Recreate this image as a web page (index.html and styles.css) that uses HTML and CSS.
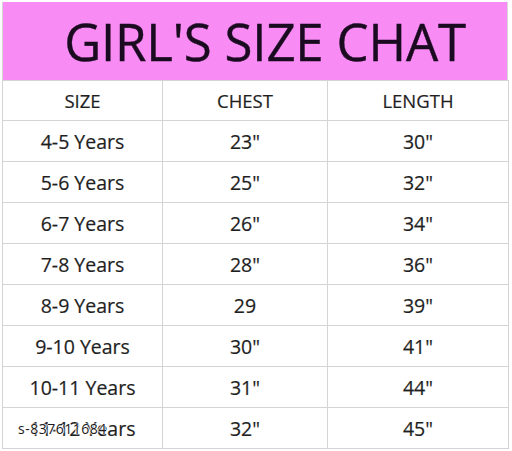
FILE: index.html
```html
<!DOCTYPE html>
<html>
<head>
<meta charset="utf-8">
<link rel="stylesheet" href="styles.css">
</head>
<body>
<div class="sheet">
  <div class="title">GIRL'S SIZE CHAT</div>
  <table class="chart">
    <colgroup><col class="c1"><col class="c2"><col class="c3"></colgroup>
    <tr class="head"><td>SIZE</td><td>CHEST</td><td>LENGTH</td></tr>
    <tr><td>4-5 Years</td><td>23"</td><td>30"</td></tr>
    <tr><td>5-6 Years</td><td>25"</td><td>32"</td></tr>
    <tr><td>6-7 Years</td><td>26"</td><td>34"</td></tr>
    <tr><td>7-8 Years</td><td>28"</td><td>36"</td></tr>
    <tr><td>8-9 Years</td><td>29</td><td>39"</td></tr>
    <tr><td>9-10 Years</td><td>30"</td><td>41"</td></tr>
    <tr><td>10-11 Years</td><td>31"</td><td>44"</td></tr>
    <tr><td class="wm-cell">11-12 Years<span class="wm">s-837611684</span></td><td>32"</td><td>45"</td></tr>
  </table>
</div>
</body>
</html>
```
FILE: styles.css
```css
html, body {
  margin: 0;
  padding: 0;
  background: #ffffff;
}
.sheet {
  width: 506px;
  padding: 2px 0 0 2px;
  font-family: "Open Sans", "Liberation Sans", sans-serif;
}
.title {
  height: 78px;
  background: #f98bf4;
  color: #1a0b20;
  font-size: 51px;
  line-height: 78px;
  text-align: center;
  letter-spacing: -0.2px;
  padding-left: 20px;
  box-sizing: border-box;
  border-left: 1px solid #d6d6d6;
  border-right: 1px solid #d6d6d6;
  -webkit-text-stroke: 0.4px #1a0b20;
}
.chart {
  width: 506px;
  border-collapse: collapse;
  table-layout: fixed;
  color: #1f1f1f;
  font-size: 19.5px;
}
.c1 { width: 160px; }
.c2 { width: 165px; }
.c3 { width: 181px; }
.chart td {
  border: 1px solid #d4d4d4;
  height: 40px;
  padding: 0;
  text-align: center;
  vertical-align: middle;
  -webkit-text-stroke: 0.2px #1f1f1f;
}
.chart tr.head td {
  height: 39px;
  font-size: 18.5px;
}
.wm-cell {
  position: relative;
}
.wm {
  position: absolute;
  left: 15px;
  top: 11px;
  font-size: 14px;
  color: #1a1a1a;
  letter-spacing: 0.5px;
  -webkit-text-stroke: 0;
  text-shadow: 0 0 2px #fff, 0 0 2px #fff, 1px 0 1px #fff, -1px 0 1px #fff;
}
```
